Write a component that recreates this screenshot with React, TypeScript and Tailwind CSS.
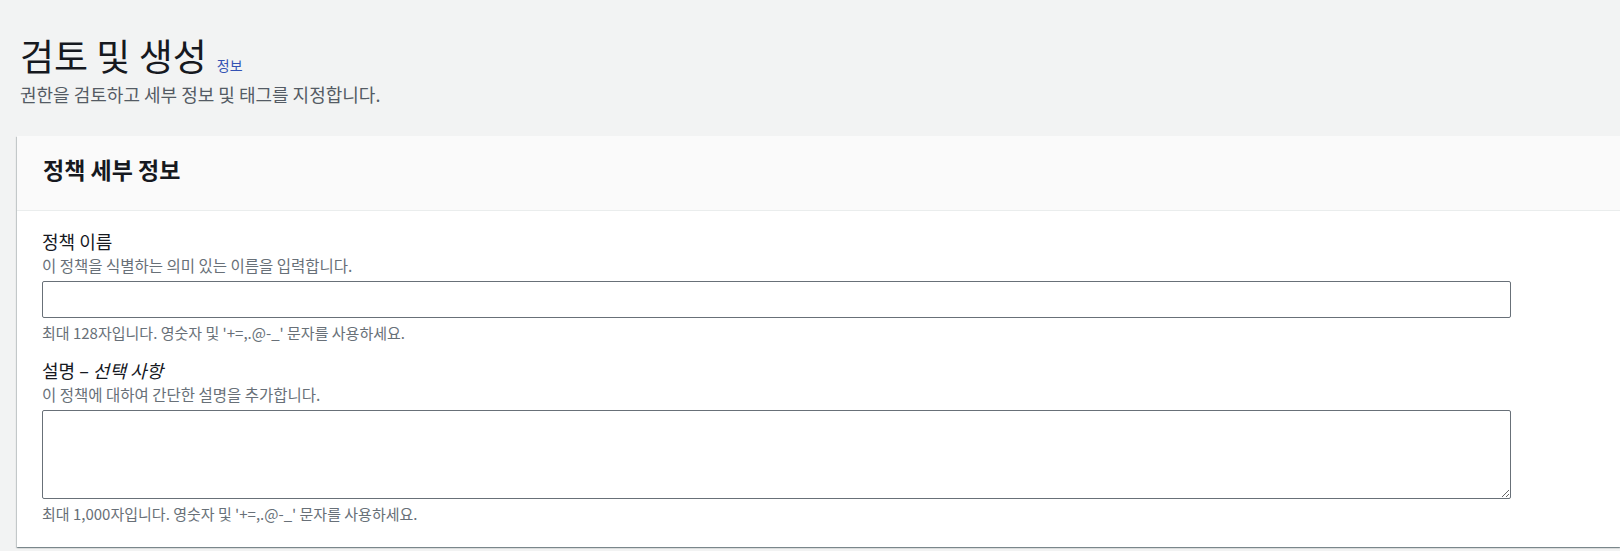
import React from 'react';

const font = { fontFamily: '"Noto Sans CJK KR", "Noto Sans", sans-serif' };

const Field: React.FC<{
  label: React.ReactNode;
  description: string;
  constraint: string;
  multiline?: boolean;
}> = ({ label, description, constraint, multiline }) => (
  <div className="flex flex-col">
    <label className="text-[18px] leading-[24px] text-[#16191f]">{label}</label>
    <p className="mt-[2px] text-[15.5px] leading-[20px] text-[#687078]">{description}</p>
    {multiline ? (
      <textarea className="mt-[6px] h-[89px] w-[1469px] rounded-[2px] border border-[#687078] bg-white px-3 py-1 text-[16px] outline-none" />
    ) : (
      <input
        type="text"
        className="mt-[6px] h-[37px] w-[1469px] rounded-[2px] border border-[#687078] bg-white px-3 text-[16px] outline-none"
      />
    )}
    <p className="mt-[5px] text-[15px] leading-[20px] text-[#687078]">{constraint}</p>
  </div>
);

export default function App() {
  return (
    <div className="min-h-[551px] w-full overflow-hidden bg-[#f2f3f3]" style={font}>
      <div className="pl-[20px] pt-[33px]">
        <div className="flex items-baseline gap-[10px]">
          <h1 className="text-[37px] leading-[44px] font-normal text-[#16191f]">검토 및 생성</h1>
          <a className="text-[14px] leading-[20px] text-[#3452b4]">정보</a>
        </div>
        <p className="mt-[5px] text-[18px] leading-[24px] text-[#545b64]">
          권한을 검토하고 세부 정보 및 태그를 지정합니다.
        </p>
      </div>

      <div className="ml-[17px] mt-[30px] bg-white shadow-[0_1px_1px_0_rgba(0,28,36,0.3),1px_1px_1px_0_rgba(0,28,36,0.15),-1px_1px_1px_0_rgba(0,28,36,0.15)]">
        <div className="h-[75px] border-b border-[#eaeded] bg-[#fafafa] px-[26px] pt-[18px]">
          <h2 className="text-[23px] leading-[30px] font-bold text-[#16191f]">정책 세부 정보</h2>
        </div>
        <div className="flex flex-col gap-[15px] px-[25px] pb-[23px] pt-[18px]">
          <Field
            label="정책 이름"
            description="이 정책을 식별하는 의미 있는 이름을 입력합니다."
            constraint="최대 128자입니다. 영숫자 및 '+=,.@-_' 문자를 사용하세요."
          />
          <Field
            label={
              <>
                설명 – <i>선택 사항</i>
              </>
            }
            description="이 정책에 대하여 간단한 설명을 추가합니다."
            constraint="최대 1,000자입니다. 영숫자 및 '+=,.@-_' 문자를 사용하세요."
            multiline
          />
        </div>
      </div>
    </div>
  );
}
